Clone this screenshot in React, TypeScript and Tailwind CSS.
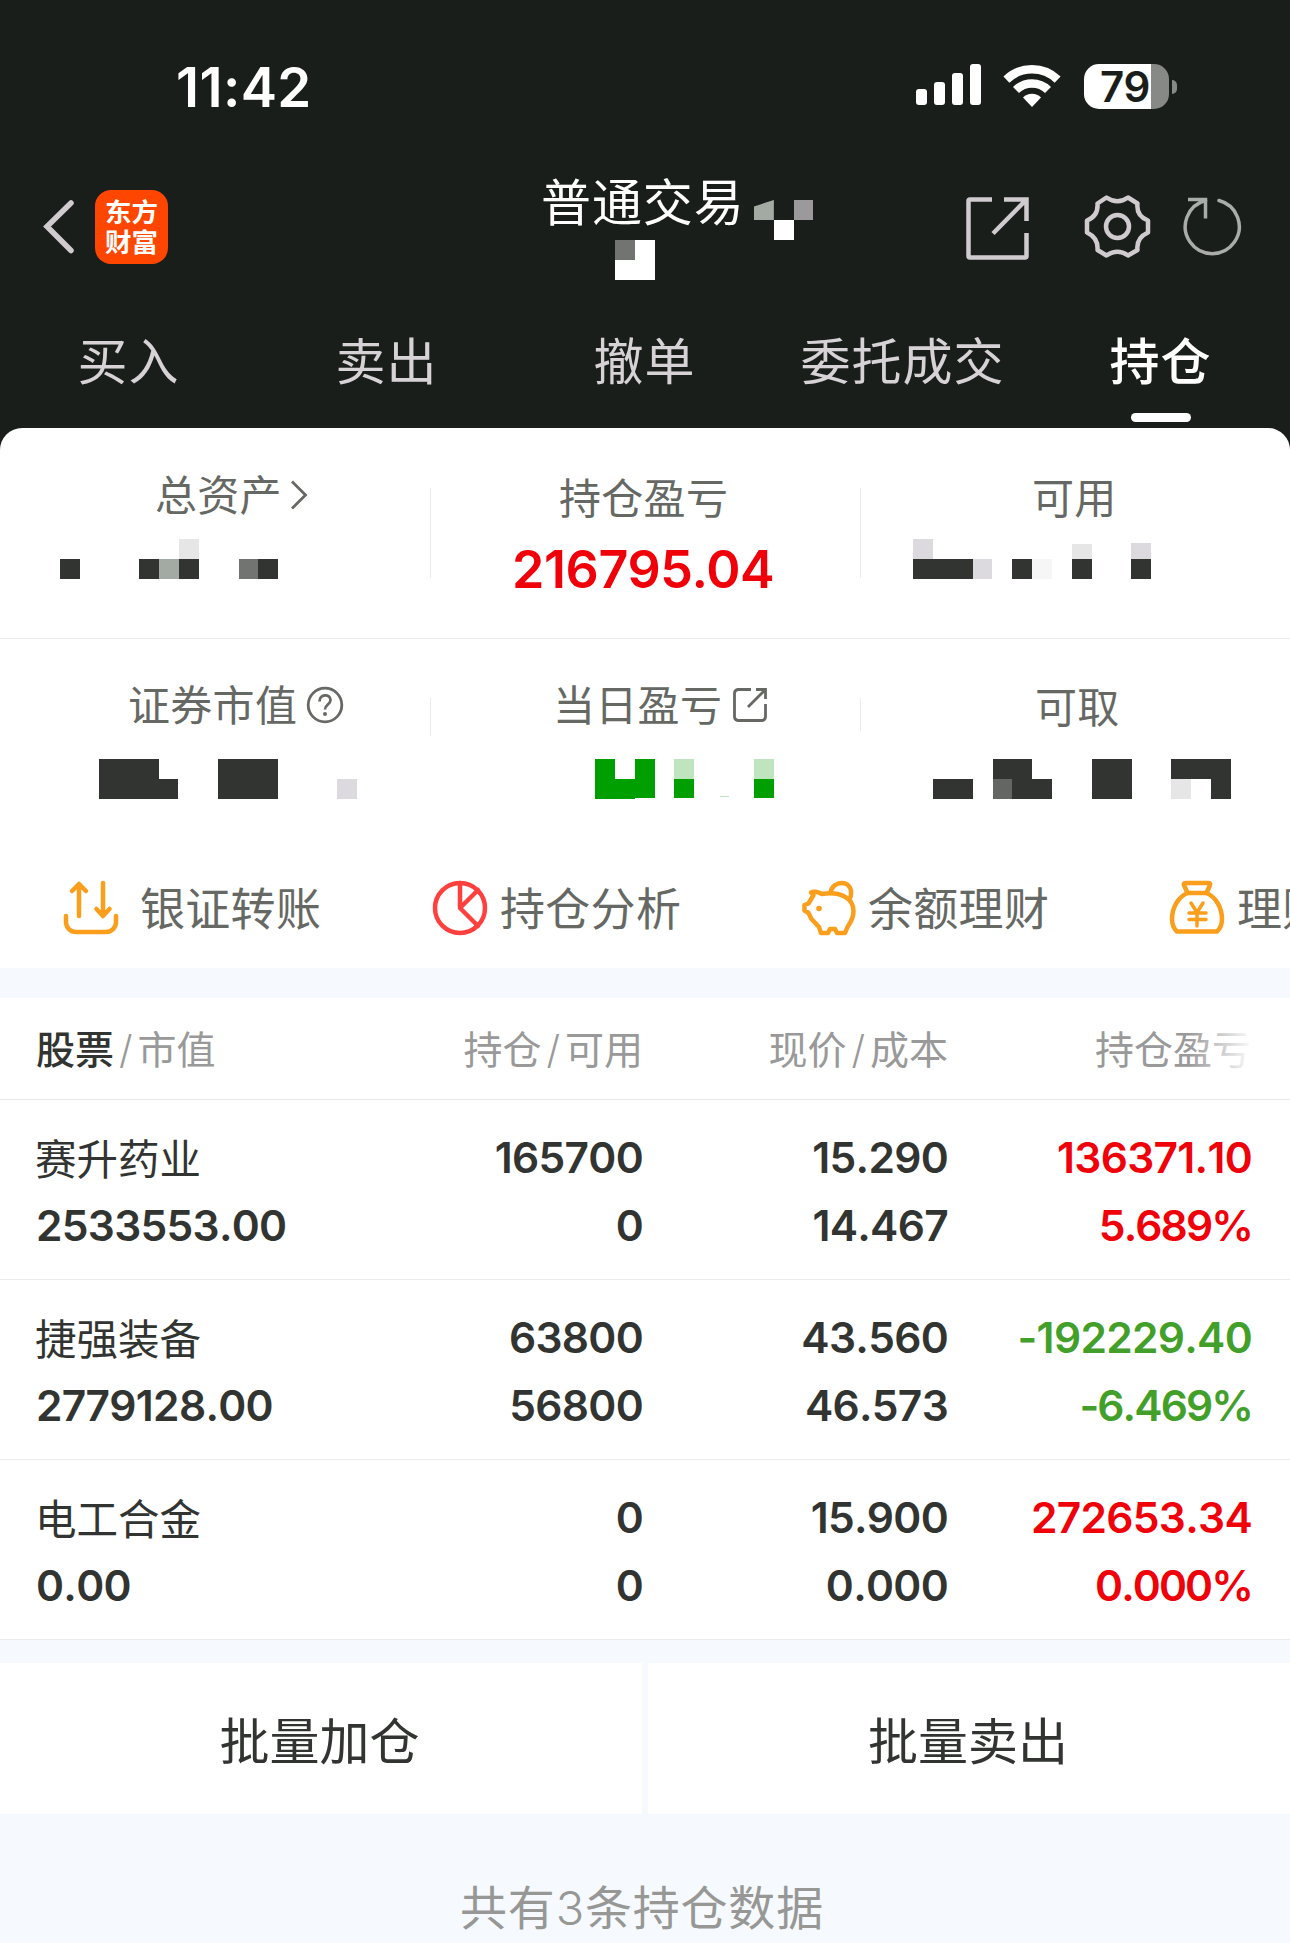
import type { ReactNode } from 'react';
import clsx from 'clsx';

// one redacted block of a value: column, row, width, height (in mosaic cells) and colour
type Cell = [number, number, number, number, string];

const DARK = '#323431';
const GREEN = '#009f00';

const masks: Record<string, Cell[]> = {
  title: [[1, 1, 1, 1, '#ffffff'], [2, 0, 1, 1, '#9c999d']],
  account: [[0, 0, 2, 2, '#ffffff'], [0, 0, 1, 1, '#717471']],
  total: [
    [0, 1, 1, 1, DARK], [4, 1, 1, 1, DARK], [5, 1, 1, 1, '#a3aaa3'], [6, 0, 1, 1, '#e6e6e6'],
    [6, 1, 1, 1, DARK], [9, 1, 1, 1, '#717471'], [10, 1, 1, 1, DARK],
  ],
  available: [
    [0, 0, 1, 1, '#dddadf'], [0, 1, 3, 1, DARK], [3, 1, 1, 1, '#dddadf'], [5, 1, 1, 1, DARK], [6, 1, 1, 1, '#f6f6f6'],
    [8, 0.25, 1, 0.75, '#e6e6e6'], [8, 1, 1, 1, DARK], [11, 0.2, 1, 0.8, '#dddadf'], [11, 1, 1, 1, DARK],
  ],
  market: [[0, 0, 3, 2, DARK], [3, 1, 1, 1, DARK], [6, 0, 3, 2, DARK], [12, 1, 1, 1, '#dddadf']],
  daily: [
    [0, 0, 1, 2, GREEN], [1, 1, 1, 1, GREEN], [2, 0, 1, 1.95, GREEN], [4, 0, 1, 1, '#bee5be'],
    [4, 1, 1, 0.95, GREEN], [6.3, 1.86, 0.45, 0.05, '#bee5be'], [8, 0, 1, 1, '#bee5be'], [8, 1, 1, 0.95, GREEN],
  ],
  withdraw: [
    [0, 1, 2, 1, DARK], [3, 0, 2, 1, DARK], [3, 1, 1, 1, '#636663'], [4, 1, 2, 1, DARK], [8, 0, 2, 2, DARK],
    [12, 0, 3, 1, DARK], [12, 1, 1, 1, '#e6e6e6'], [14, 1, 1, 1, DARK],
  ],
};

const tabs = ['买入', '卖出', '撤单', '委托成交', '持仓'];

const holdings = [
  { name: '赛升药业', value: '2533553.00', held: '165700', free: '0', price: '15.290', cost: '14.467', profit: '136371.10', rate: '5.689%' },
  { name: '捷强装备', value: '2779128.00', held: '63800', free: '56800', price: '43.560', cost: '46.573', profit: '-192229.40', rate: '-6.469%' },
  { name: '电工合金', value: '0.00', held: '0', free: '0', price: '15.900', cost: '0.000', profit: '272653.34', rate: '0.000%' },
];

function Mask({ cells, cols, className, children }: { cells: Cell[]; cols: number; className?: string; children?: ReactNode }) {
  return (
    <svg
      className={className}
      width={cols * 19.85}
      height={40}
      viewBox={`0 0 ${cols} 2`}
      preserveAspectRatio="none"
      shapeRendering="crispEdges"
    >
      {cells.map(([x, y, w, h, fill], i) => (
        <rect key={i} x={x} y={y} width={w} height={h} fill={fill} />
      ))}
      {children}
    </svg>
  );
}

function StatusBar() {
  return (
    <div className="flex h-[170px] items-start justify-between pl-[176px] pr-[113px] pt-[54px] text-white">
      <span className="text-[54.5px] font-semibold leading-[67px] tracking-[0.4px]">11:42</span>
      <div className="flex items-start pt-[10px]">
        <svg width="66" height="42" viewBox="0 0 66 42" fill="currentColor">
          <rect x="0" y="25" width="11" height="16" rx="3" />
          <rect x="18" y="18" width="11" height="23" rx="3" />
          <rect x="36" y="9" width="11" height="32" rx="3" />
          <rect x="54" y="0" width="11" height="41" rx="3" />
        </svg>
        <svg className="ml-[21px]" width="58" height="43" viewBox="0 0 58 43" fill="none" stroke="currentColor" strokeWidth="8.6">
          <path d="M3.400 15.600a37 37 0 0 1 51.200 0" />
          <path d="M13 26a23 23 0 0 1 32 0" />
          <path d="M29 43l-9-9.600a13 13 0 0 1 18 0z" fill="currentColor" stroke="none" />
        </svg>
        <div className="ml-[23px] flex h-[45px] w-[85px] items-center rounded-[15px] bg-linear-to-r from-white from-[79%] to-[#868986] to-[79%] pl-[16px]">
          <span className="text-[42px] font-semibold leading-[52px] tracking-[-0.2px] text-[#1a1e1a]">79</span>
        </div>
        <div className="ml-[3px] mt-[16px] h-[14px] w-[5px] rounded-r-full bg-[#868986]" />
      </div>
    </div>
  );
}

function NavBar() {
  return (
    <div className="flex h-[140px] items-start text-[#cfcbcf]">
      <div className="flex w-[430px] items-center pl-[42px] pt-[20px]">
        <svg width="32" height="54" viewBox="0 0 32 54" fill="none" stroke="currentColor" strokeWidth="5.500" strokeLinecap="round">
          <path d="M29 3L5 26.500l24 24" />
        </svg>
        <div className="ml-[21px] flex h-[74px] w-[73px] flex-col items-center justify-center rounded-[16px] bg-[#ff4600] text-[26.5px] font-bold leading-[30px] text-white">
          <span>东方</span>
          <span>财富</span>
        </div>
      </div>
      <div className="flex w-[430px] flex-col items-start pl-[111px]">
        <div className="flex items-start text-white">
          <span className="mt-px text-[50px] leading-[64px] tracking-[0.9px]">普通交易</span>
          <Mask className="ml-[9px] mt-[30px]" cells={masks.title} cols={3}>
            <path d="M0 .32L1 0V1H0z" fill="#a3aaa3" shapeRendering="auto" />
          </Mask>
        </div>
        <Mask className="ml-[74px]" cells={masks.account} cols={2} />
      </div>
      <div className="flex flex-1 items-start pl-[105px] pt-[24px]">
        <svg className="mt-px" width="66" height="66" viewBox="0 0 66 66" fill="none" stroke="currentColor" strokeWidth="4.500" strokeLinejoin="round">
          <path d="M27 4.500H5A1.500 1.500 0 0 0 3.500 6v55A1.500 1.500 0 0 0 5 62.500h55a1.500 1.500 0 0 0 1.500-1.500V38" />
          <path d="M39 4.500h22.500V26M61 5L28 38.500" strokeLinejoin="miter" />
        </svg>
        <svg className="ml-[52px]" width="68" height="66" viewBox="0 0 68 66" fill="none" stroke="currentColor" strokeWidth="4.500" strokeLinejoin="round">
          <path d="M23.500 3.500Q34.500 11 45 3.500L54.500 9.500Q53 22 65 26.500V38.500Q53 44 54.500 56L45 61.500Q34.500 54 23.500 61.500L14.500 56Q15.500 44 4 38.500V26.500Q15.500 22 14.500 9.500Z" />
          <circle cx="34.500" cy="32.500" r="11.500" />
        </svg>
        <svg className="ml-[32px] mt-px" width="62" height="62" viewBox="0 0 62 62" fill="none" stroke="#a9aca9" strokeWidth="3.500">
          <path d="M36 5.500A27 27 0 1 1 22.500 5.500" strokeLinecap="round" />
          <path d="M5 4.500h17.500v19" />
        </svg>
      </div>
    </div>
  );
}

function TabBar() {
  return (
    <div className="grid h-[118px] grid-cols-5 text-[50px] text-[#d6d2d6]">
      {tabs.map((tab) => {
        const active = tab === '持仓';
        return (
          <div key={tab} className={clsx('flex flex-col items-center', active && 'font-medium text-white')}>
            <span className="mt-[20px] whitespace-nowrap pr-px leading-[64px] tracking-[1px]">{tab}</span>
            {active && <span className="mt-[19px] h-[9px] w-[60px] rounded-full bg-white" />}
          </div>
        );
      })}
    </div>
  );
}

function ShareIcon() {
  return (
    <svg className="-mt-[2px]" width="36" height="36" viewBox="0 0 36 36" fill="none" stroke="currentColor" strokeWidth="2.800">
      <path d="M19 2.500H6A4 4 0 0 0 2.500 6v24A4 4 0 0 0 6 33.500h24a4 4 0 0 0 3.500-3.500V17" />
      <path d="M24 2.500h9.500V12M33 3L16 20" />
    </svg>
  );
}

function Stat({ label, icon, className, children }: { label: string; icon?: ReactNode; className?: string; children: ReactNode }) {
  return (
    <div className="w-[430px] text-[#666864]">
      <div className={clsx('flex items-center text-[42px] leading-[56px] tracking-[0.3px]', className)}>
        <span>{label}</span>
        {icon}
      </div>
      {children}
    </div>
  );
}

function Summary() {
  return (
    <div className="rounded-t-[22px] bg-white">
      <div className="relative flex h-[211px] border-b border-[#ebebeb]">
        <Stat
          label="总资产"
          className="pl-[155px] pt-[40px]"
          icon={
            <svg className="-mt-[2px] ml-[8px]" width="18" height="30" viewBox="0 0 18 30" fill="none" stroke="currentColor" strokeWidth="2.800">
              <path d="M2 1.500l13.500 13.500L2 28.500" />
            </svg>
          }
        >
          <Mask className="ml-[60px] mt-[15px]" cells={masks.total} cols={11} />
        </Stat>
        <Stat label="持仓盈亏" className="pl-[129px] pt-[43px]">
          <div className="mt-[11px] pl-[82px] text-[52px] font-semibold leading-[64px] tracking-[-0.4px] text-[#f00008]">216795.04</div>
        </Stat>
        <Stat label="可用" className="pl-[172px] pt-[43px]">
          <Mask className="ml-[53px] mt-[12px]" cells={masks.available} cols={12} />
        </Stat>
        <span className="absolute left-[430px] top-[60px] h-[90px] w-px bg-[#ebebeb]" />
        <span className="absolute left-[860px] top-[60px] h-[90px] w-px bg-[#ebebeb]" />
      </div>
      <div className="relative flex h-[225px]">
        <Stat
          label="证券市值"
          className="pl-[128px] pt-[39px]"
          icon={
            <svg className="-mt-[2px] ml-[9px]" width="38" height="38" viewBox="0 0 38 38" fill="none" stroke="currentColor" strokeWidth="2.800">
              <circle cx="19" cy="19" r="16.800" />
              <path d="M13.500 15.500c0-8 11-8 11-1.500 0 4.500-5.500 4.500-5.500 9.500" />
              <circle cx="19" cy="28" r="2" fill="currentColor" stroke="none" />
            </svg>
          }
        >
          <Mask className="ml-[99px] mt-[25px]" cells={masks.market} cols={13} />
        </Stat>
        <Stat label="当日盈亏" className="gap-[10px] pl-[123px] pt-[39px]" icon={<ShareIcon />}>
          <Mask className="ml-[165px] mt-[25px]" cells={masks.daily} cols={9} />
        </Stat>
        <Stat label="可取" className="pl-[175px] pt-[41px]">
          <Mask className="ml-[73px] mt-[23px]" cells={masks.withdraw} cols={15} />
        </Stat>
        <span className="absolute left-[430px] top-[59px] h-[38px] w-px bg-[#ebebeb]" />
        <span className="absolute left-[860px] top-[59px] h-[33px] w-px bg-[#ebebeb]" />
      </div>
    </div>
  );
}

function Shortcuts() {
  const svg = { width: 56, height: 56, viewBox: '0 0 56 56', fill: 'none', strokeWidth: 4.5, strokeLinejoin: 'round', strokeLinecap: 'round' } as const;
  return (
    <div className="flex h-[104px] items-start overflow-hidden bg-white pl-[63px] pt-[12px] text-[45px] leading-[64px] tracking-[0.3px] text-[#666864]">
      <div className="flex w-[369px] shrink-0 items-center gap-[21px] whitespace-nowrap">
        <svg {...svg} stroke="#fa9e1b" className="-mt-[3px]">
          <path d="M3 36v6a10 10 0 0 0 10 10h30a10 10 0 0 0 10-10v-6M16 36V4M9 11l7-7 7 7M40 3v32M33.500 29l6.500 7 6.500-7" />
        </svg>
        <span className="pt-[2px]">银证转账</span>
      </div>
      <div className="flex w-[369px] shrink-0 items-center gap-[12px] whitespace-nowrap">
        <svg {...svg} stroke="#ff403e" className="-mt-[2px]">
          <circle cx="28" cy="28" r="25" />
          <path d="M28 3v25l18 18M28 28l18-18" />
        </svg>
        <span className="pt-[2px]">持仓分析</span>
      </div>
      <div className="flex w-[368px] shrink-0 items-center gap-[11px] whitespace-nowrap">
        <svg {...svg} stroke="#fa9e1b" className="-mt-[2px]">
          <path d="M29.500 13C31 0 51-1 50 13.500q0 3-1 4.500" />
          <path d="M10 12.500c2-1.500 7-1 11 1.500 18-3 31.500 4 31.500 17 0 8-3.500 12-6 16l-2.500 6h-8l-2-4h-5l-2 4h-7l-2-6-7.500-8-3-6-4-2.500V25l4-1.500 5-8.500z" />
          <circle cx="18" cy="28.500" r="2.800" fill="#fa9e1b" stroke="none" />
        </svg>
        <span className="pt-[2px]">余额理财</span>
      </div>
      <div className="flex shrink-0 items-center gap-[12px] whitespace-nowrap">
        <svg {...svg} stroke="#fa9e1b" className="-mt-[2px]">
          <path d="M17 3h22q3 0 2 2l-3.500 8h-19L15 5q-1-2 2-2z" />
          <path d="M18.500 13C9 17 3 28 3 39q0 8 5 12.500h40q5-4.500 5-12.500c0-11-6-22-15.500-26" />
          <path d="M22 23l6 9.500 6-9.500M28 33v13M20 33h17M20 39.500h17" strokeWidth="3.500" />
        </svg>
        <span className="pt-[2px]">理财</span>
      </div>
    </div>
  );
}

function HoldingTable() {
  return (
    <div className="bg-white text-[#323431]">
      <div className="flex h-[102px] border-b border-[#e8e8e8] px-[36px] pt-[24px] text-[39px] leading-[56px] text-[#999]">
        <div className="flex w-[302px]">
          <span className="font-medium text-[#323431]">股票</span>
          <span className="mx-[5px] font-light">/</span>
          <span>市值</span>
        </div>
        <div className="flex w-[305px] justify-end"><span>持仓</span><span className="mx-[5px] font-light">/</span><span>可用</span></div>
        <div className="flex w-[305px] justify-end"><span>现价</span><span className="mx-[5px] font-light">/</span><span>成本</span></div>
        <div className="relative w-[306px] whitespace-nowrap pl-[147px]">
          持仓盈亏
          <span className="absolute right-0 top-0 h-full w-[66px] bg-linear-to-r from-transparent to-white" />
        </div>
      </div>
      {holdings.map((row) => (
        <div key={row.name} className="flex h-[180px] border-b border-[#ebebeb] pl-[36px] pt-[24px] text-[42.5px] font-semibold leading-[68px] tracking-[-0.7px] [font-kerning:none]">
          <div className="w-[302px]">
            <div className="relative -left-px top-[2px] text-[41.5px] font-normal tracking-normal">{row.name}</div>
            <div>{row.value}</div>
          </div>
          <div className="w-[305px] text-right">
            <div>{row.held}</div>
            <div>{row.free}</div>
          </div>
          <div className="w-[305px] text-right">
            <div>{row.price}</div>
            <div>{row.cost}</div>
          </div>
          <div className={clsx('w-[304px] text-right', row.profit.startsWith('-') ? 'text-[#42a02a]' : 'text-[#f00008]')}>
            <div>{row.profit}</div>
            <div className="tracking-[-1.9px]">{row.rate}</div>
          </div>
        </div>
      ))}
    </div>
  );
}

export default function App() {
  return (
    <div className="h-[1943px] w-[1290px] overflow-hidden bg-[#f6faff] font-['Inter','Noto_Sans_CJK_SC',sans-serif]">
      <div className="bg-[#1a1e1a]">
        <StatusBar />
        <NavBar />
        <TabBar />
        <Summary />
      </div>
      <Shortcuts />
      <div className="h-[30px]" />
      <HoldingTable />
      <div className="mt-[23px] grid h-[151px] grid-cols-2 gap-[6px] text-[50px] text-[#323431]">
        <button className="bg-white pr-[3px] pt-[7px]">批量加仓</button>
        <button className="bg-white pr-[2px] pt-[7px]">批量卖出</button>
      </div>
      <div className="pr-[6px] pt-[61px] text-center text-[47px] leading-[66px] tracking-[0.8px] text-[#979896]">
        共有<span className="font-light">3</span>条持仓数据
      </div>
    </div>
  );
}
